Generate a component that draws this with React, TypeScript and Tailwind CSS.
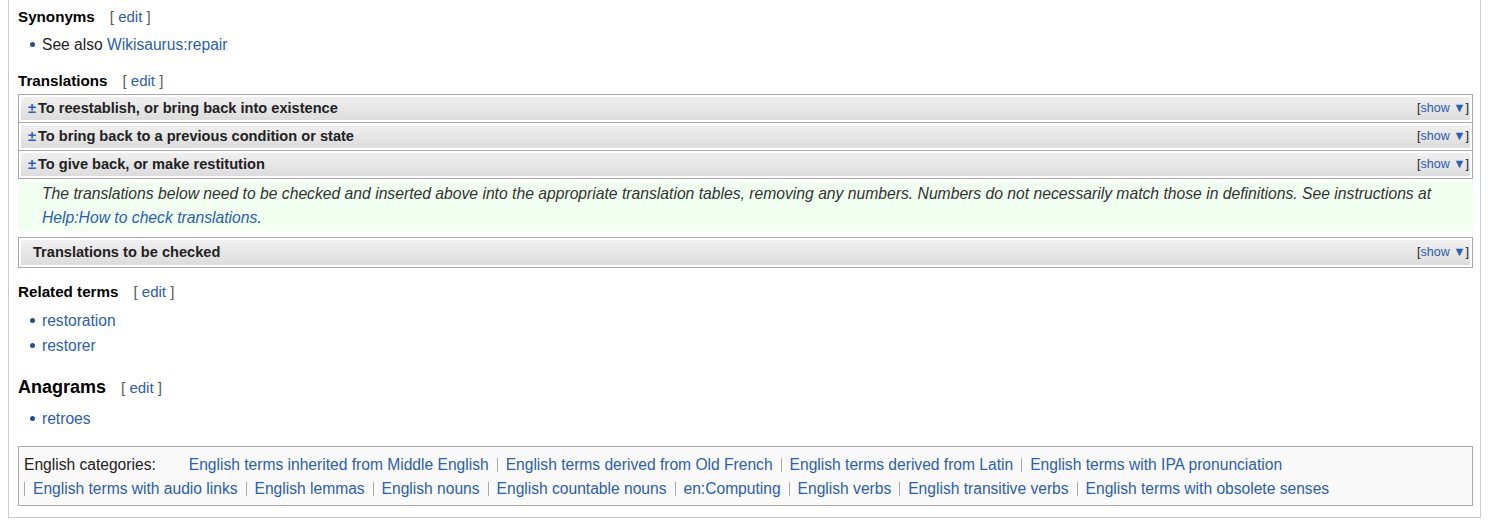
import React from 'react';

const LINK = 'text-[#2a5db7]';

const EditLink: React.FC = () => (
  <span className="ml-[15px] text-[15px] font-normal text-[#54595d]">
    [ <span className={LINK}>edit</span> ]
  </span>
);

const SectionHead: React.FC<{ title: string; big?: boolean }> = ({ title, big }) => (
  <div className="flex items-baseline h-[20px] leading-[20px] whitespace-nowrap">
    <span className={big ? 'text-[18px] font-bold text-black' : 'text-[15.2px] font-bold text-black'}>{title}</span>
    <EditLink />
  </div>
);

const Bullet: React.FC<{ children: React.ReactNode }> = ({ children }) => (
  <li className="flex items-center h-[25px] leading-[25px]">
    <span className="ml-[12px] mr-[7px] w-[5px] h-[5px] rounded-full bg-[#22508f] shrink-0" />
    <span>{children}</span>
  </li>
);

const NavFrame: React.FC<{ title: string; toggle?: boolean; tall?: boolean; first?: boolean }> = ({
  title,
  toggle = true,
  tall,
  first,
}) => (
  <div className={`border border-[#aaa] p-[2px] bg-white ${first ? '' : '-mt-px'}`}>
    <div
      className={`flex items-center justify-between bg-linear-to-b from-[#f0f0f0] to-[#dcdcdc] ${
        tall ? 'h-[25px] pl-[12px]' : 'h-[23px] pl-[7px]'
      } pr-[1px]`}
    >
      <div className="flex items-center text-[14.6px] font-bold text-[#222]">
        {toggle && <span className="text-[#2a5db7] mr-[2px]">±</span>}
        <span>{title}</span>
      </div>
      <span className="text-[12.5px] text-[#222]">
        [<span className={LINK}>show ▼</span>]
      </span>
    </div>
  </div>
);

const row1 = [
  'English terms inherited from Middle English',
  'English terms derived from Old French',
  'English terms derived from Latin',
  'English terms with IPA pronunciation',
];

const row2 = [
  'English terms with audio links',
  'English lemmas',
  'English nouns',
  'English countable nouns',
  'en:Computing',
  'English verbs',
  'English transitive verbs',
  'English terms with obsolete senses',
];

export default function App() {
  return (
    <div className="w-[1492px] h-[528px] overflow-hidden bg-white font-['Liberation_Sans',Arial,sans-serif] text-[15.6px] text-[#222]">
      <div className="ml-[8px] w-[1473px] border-l border-r border-b border-[#c8ccd1] pl-[9px] pr-[7px] pt-[7px] pb-[11px]">
        <SectionHead title="Synonyms" />
        <ul className="mt-[5px]">
          <Bullet>
            See also <span className={LINK}>Wikisaurus:repair</span>
          </Bullet>
        </ul>

        <div className="mt-[14px]">
          <SectionHead title="Translations" />
        </div>
        <div className="mt-[3px]">
          <NavFrame first title="To reestablish, or bring back into existence" />
          <NavFrame title="To bring back to a previous condition or state" />
          <NavFrame title="To give back, or make restitution" />
        </div>

        <div className="mt-[3px] bg-[#f0fff0] pl-[24px] pb-[1px] italic text-[#333] leading-[24px] text-[15.7px]">
          The translations below need to be checked and inserted above into the appropriate translation tables, removing
          any numbers. Numbers do not necessarily match those in definitions. See instructions at{' '}
          <span className={LINK}>Help:How to check translations</span>.
        </div>

        <div className="mt-[6px]">
          <NavFrame first tall toggle={false} title="Translations to be checked" />
        </div>

        <div className="mt-[14px]">
          <SectionHead title="Related terms" />
        </div>
        <ul className="mt-[6px]">
          <Bullet>
            <span className={LINK}>restoration</span>
          </Bullet>
          <Bullet>
            <span className={LINK}>restorer</span>
          </Bullet>
        </ul>

        <div className="mt-[17px] h-[24px] flex items-center">
          <SectionHead big title="Anagrams" />
        </div>
        <ul className="mt-[7px]">
          <Bullet>
            <span className={LINK}>retroes</span>
          </Bullet>
        </ul>

        <div className="mt-[15px] border border-[#aaa] bg-[#f9f9f9] pl-[5px] pt-[6px] pb-[4px] leading-[24px] whitespace-nowrap">
          <div className="flex">
            <span className="text-[#222] mr-[25px]">English categories:</span>
            {row1.map((c, i) => (
              <span key={c} className={`px-[8px] ${i === 0 ? '' : 'border-l border-[#aaa] my-[5px] leading-[14px]'}`}>
                <span className={LINK}>{c}</span>
              </span>
            ))}
          </div>
          <div className="flex">
            {row2.map((c) => (
              <span key={c} className="px-[8px] border-l border-[#aaa] my-[5px] leading-[14px]">
                <span className={LINK}>{c}</span>
              </span>
            ))}
          </div>
        </div>
      </div>
    </div>
  );
}
